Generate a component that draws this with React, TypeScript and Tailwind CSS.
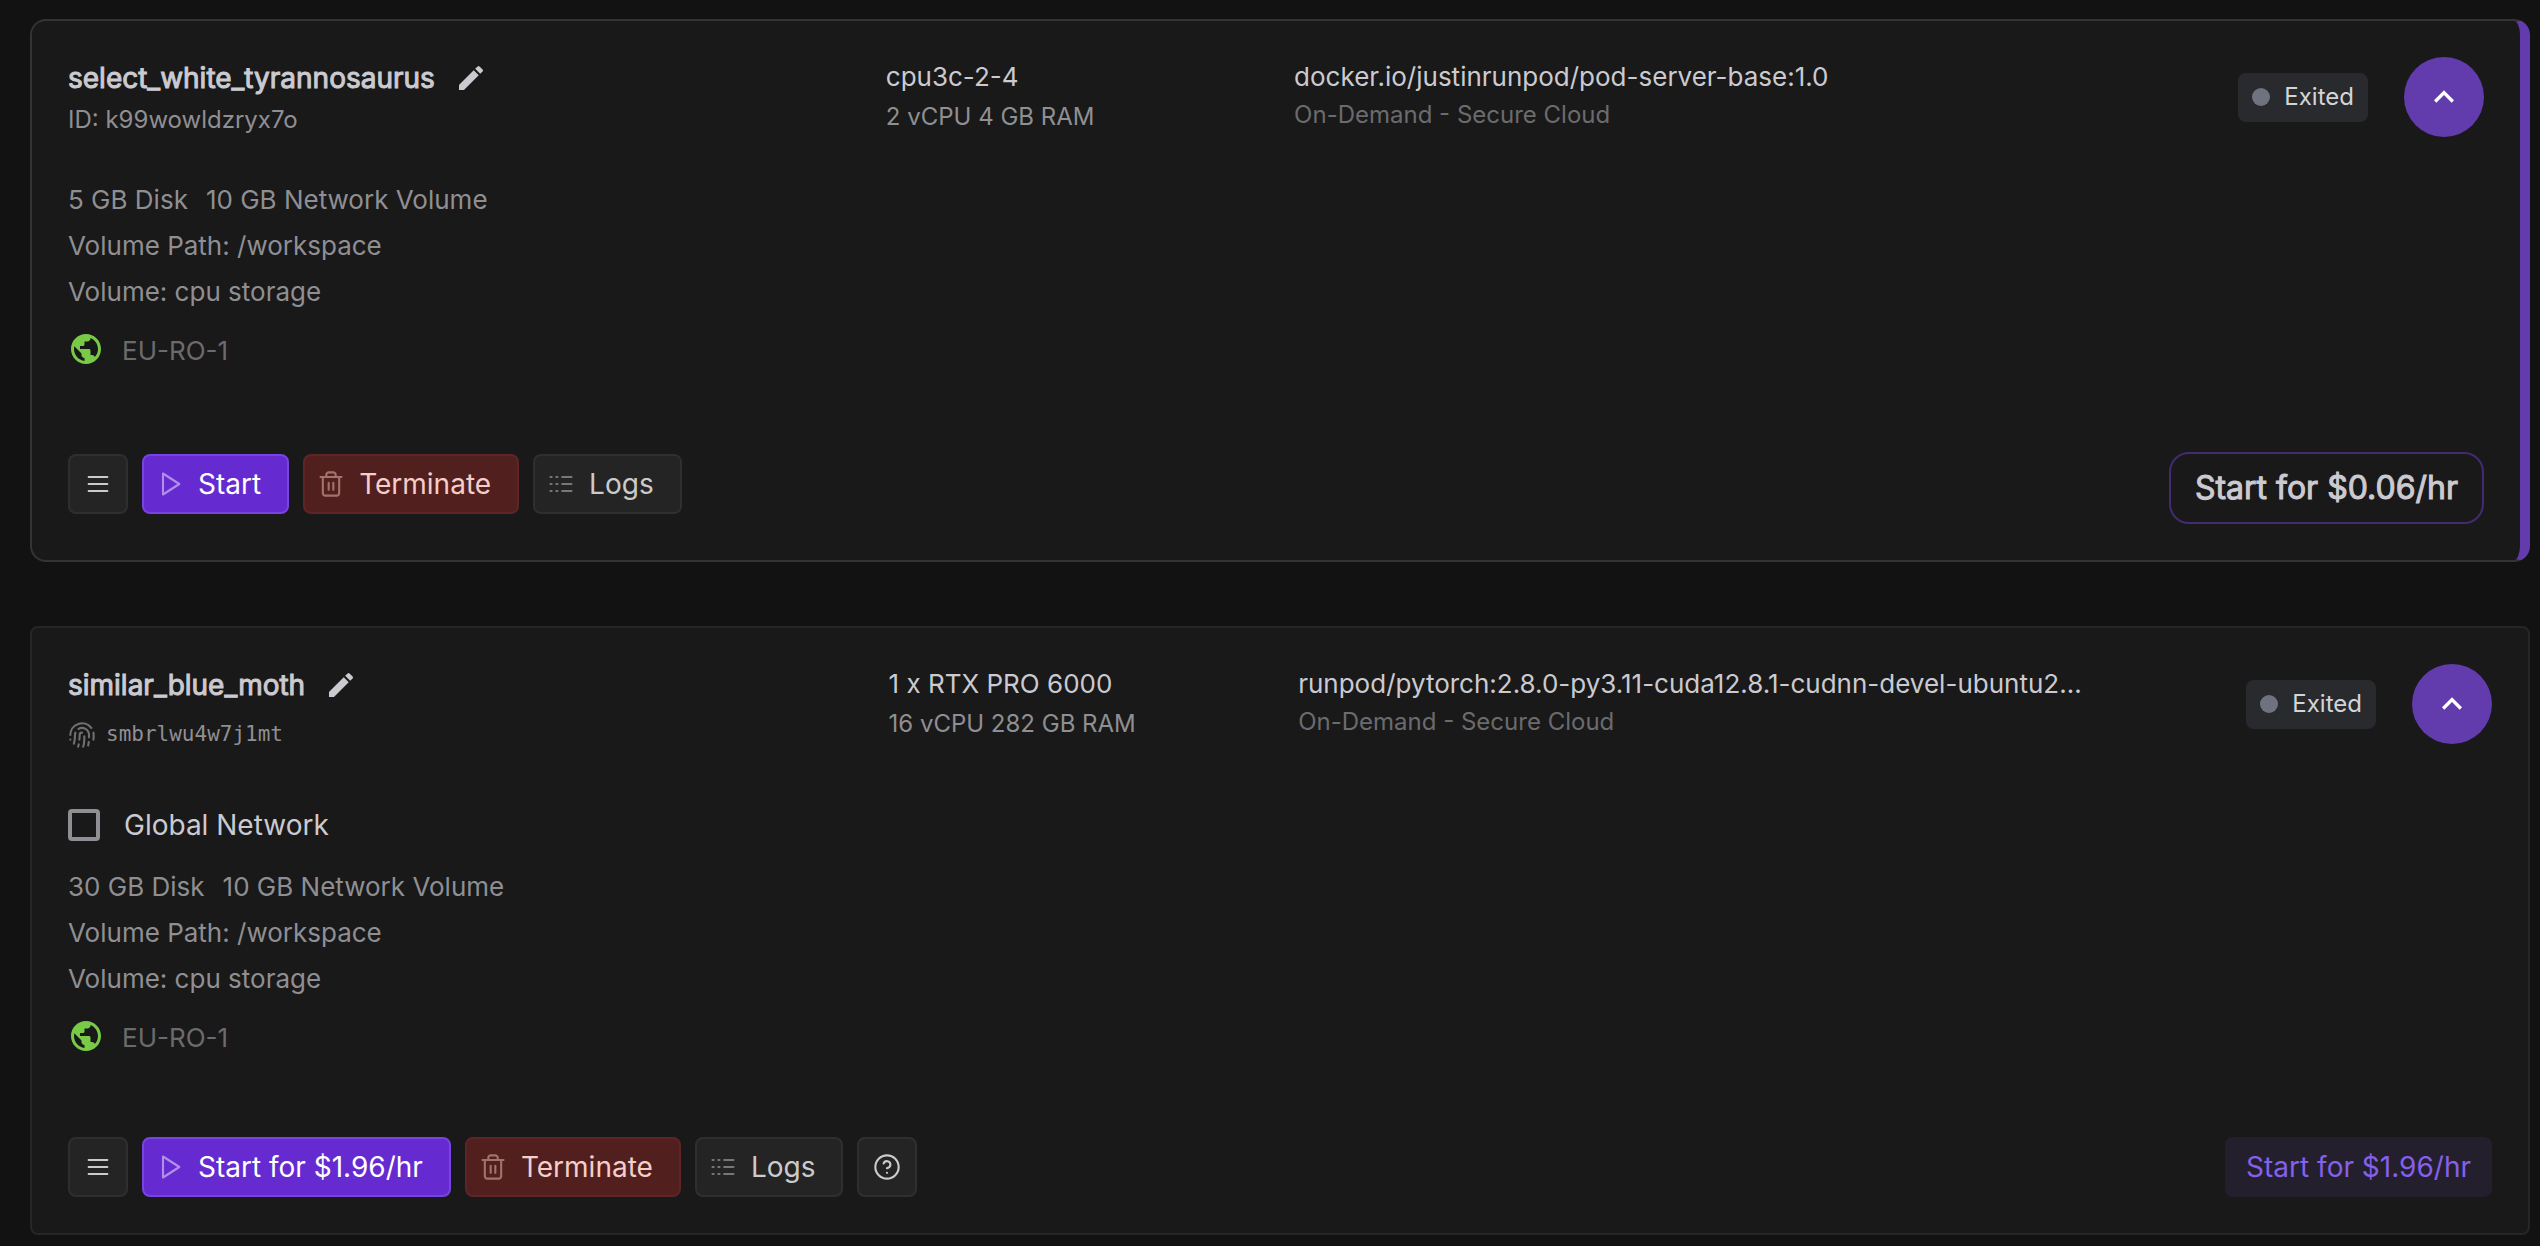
import type { ReactNode } from "react";
import { CircleHelp, Fingerprint } from "lucide-react";
import { MdEdit, MdExpandLess, MdPublic } from "react-icons/md";

type Pod = {
  name: string;
  id: string;
  machine: string;
  specs: string;
  image: string;
  disk: string;
  price: string;
  featured: boolean;
};

const PODS: Pod[] = [
  {
    name: "select_white_tyrannosaurus",
    id: "k99wowldzryx7o",
    machine: "cpu3c-2-4",
    specs: "2 vCPU 4 GB RAM",
    image: "docker.io/justinrunpod/pod-server-base:1.0",
    disk: "5 GB Disk",
    price: "$0.06/hr",
    featured: true,
  },
  {
    name: "similar_blue_moth",
    id: "smbrlwu4w7j1mt",
    machine: "1 x RTX PRO 6000",
    specs: "16 vCPU 282 GB RAM",
    image: "runpod/pytorch:2.8.0-py3.11-cuda12.8.1-cudnn-devel-ubuntu2…",
    disk: "30 GB Disk",
    price: "$1.96/hr",
    featured: false,
  },
];

function LineIcon({ children, className = "" }: { children: ReactNode; className?: string }) {
  return (
    <svg
      viewBox="0 0 24 24"
      fill="none"
      stroke="currentColor"
      strokeWidth="1.8"
      strokeLinecap="round"
      strokeLinejoin="round"
      className={`size-7 shrink-0 ${className}`}
      aria-hidden="true"
    >
      {children}
    </svg>
  );
}

const BUTTON = "flex h-[60px] items-center rounded-lg border-2 text-[28px]";
const GREY = "border-[#2f2f2f] bg-[#242424] text-[#cbcbcb]";

function Actions({ pod }: { pod: Pod }) {
  return (
    <div className="flex gap-3.5">
      <button aria-label="Menu" className={`${BUTTON} ${GREY} w-[60px] justify-center`}>
        <LineIcon>
          <path d="M4 6h16M4 12h16M4 18h16" />
        </LineIcon>
      </button>
      <button className={`${BUTTON} gap-3.5 border-[#7743e3] bg-[#652bd0] pl-3 pr-[26px] text-white`}>
        <LineIcon className="text-[#b08fe9]">
          <path d="M6 3l14 9-14 9z" />
        </LineIcon>
        {pod.featured ? "Start" : `Start for ${pod.price}`}
      </button>
      <button className={`${BUTTON} gap-3.5 border-[#5f2425] bg-[#51201e] pl-3 pr-[26px] text-[#f6cdc8]`}>
        <LineIcon className="text-[#a6706d]">
          <path d="M3 6h18M19 6v14c0 1-1 2-2 2H7c-1 0-2-1-2-2V6M8 6V4c0-1 1-2 2-2h4c1 0 2 1 2 2v2M10 11v6M14 11v6" />
        </LineIcon>
        Terminate
      </button>
      <button className={`${BUTTON} ${GREY} gap-3.5 pl-3 pr-[26px]`}>
        <LineIcon className="text-[#777777]">
          <path d="M13 12h8M13 18h8M13 6h8M3 12h1M3 18h1M3 6h1M8 12h1M8 18h1M8 6h1" />
        </LineIcon>
        Logs
      </button>
      {!pod.featured && (
        <button aria-label="Help" className={`${BUTTON} ${GREY} w-[60px] justify-center`}>
          <CircleHelp className="size-7" strokeWidth={1.8} />
        </button>
      )}
    </div>
  );
}

function PodCard({ pod }: { pod: Pod }) {
  return (
    <article
      className={
        pod.featured
          ? "rounded-2xl border-2 border-r-[10px] border-[#343434] border-r-[#623bad] bg-[#191919] p-9"
          : "rounded-lg border-2 border-[#262626] bg-[#191919] p-9"
      }
    >
      <header className="grid grid-cols-[677fr_338fr_652fr_333fr] items-start">
        <div className="min-w-0">
          <div className="flex h-[42px] items-center gap-5">
            <h2 className="text-[28px] text-[#cbcad1] [-webkit-text-stroke:1px_#cbcad1]">{pod.name}</h2>
            <button aria-label="Rename pod" className="text-[#cbcad1]">
              <MdEdit className="size-8" />
            </button>
          </div>
          {pod.featured ? (
            <p className="text-[24px] leading-[42px] text-[#8f8f93]">ID: {pod.id}</p>
          ) : (
            <div className="flex h-[58px] items-center gap-2.5 text-[#8f8f93]">
              <Fingerprint className="size-7 text-[#707073]" strokeWidth={1.8} />
              <p className="font-['DejaVu_Sans_Mono',monospace] text-[21px]">{pod.id}</p>
            </div>
          )}
        </div>
        <div className="min-w-0">
          <p className="text-[26px] leading-10 text-[#cbcad1]">{pod.machine}</p>
          <p className="text-[24px] leading-10 text-[#8f8f93]">{pod.specs}</p>
        </div>
        <div className="min-w-0">
          <p className="whitespace-nowrap text-[26px] leading-10 text-[#cbcad1]">{pod.image}</p>
          <p className="text-[24px] leading-9 text-[#6b6b6e]">On-Demand - Secure Cloud</p>
        </div>
        <div className="flex items-center justify-end gap-9">
          <span className="flex h-[49px] items-center gap-3.5 rounded-lg bg-[#292a2e] px-3.5 text-[24px] text-[#d3d4d7]">
            <i className="size-[18px] rounded-full bg-[#6f7380]" />
            Exited
          </span>
          <button
            aria-label="Collapse"
            className="flex size-20 items-center justify-center rounded-full bg-[#623bad] text-white"
          >
            <MdExpandLess className="size-10" />
          </button>
        </div>
      </header>

      <section className="mt-9 text-[26px] leading-[46px] text-[#8f8f93]">
        {!pod.featured && (
          <label className="mb-3.5 flex h-[50px] items-center gap-6 text-[28px] text-[#cbcad1]">
            <input
              type="checkbox"
              className="size-8 appearance-none rounded border-4 border-[#8f8f93] checked:bg-[#623bad]"
            />
            Global Network
          </label>
        )}
        <p className="flex gap-[18px]">
          <span>{pod.disk}</span>
          <span>10 GB Network Volume</span>
        </p>
        <p>Volume Path: /workspace</p>
        <p>Volume: cpu storage</p>
        <p className="mt-4 flex h-9 items-center gap-[18px] text-[#6b6b6e]">
          <MdPublic className="size-9 text-[#79cb47]" />
          <span className="pt-1">EU-RO-1</span>
        </p>
      </section>

      {pod.featured ? (
        <footer className="mt-[85px] flex items-start justify-between">
          <div className="pt-0.5">
            <Actions pod={pod} />
          </div>
          <button className="h-[72px] rounded-[20px] border-2 border-[#432a71] px-6 text-[32px] text-[#cbcad1] [-webkit-text-stroke:1px_#cbcad1]">
            Start for {pod.price}
          </button>
        </footer>
      ) : (
        <footer className="mt-[83px] flex items-center justify-between">
          <Actions pod={pod} />
          <button className="h-[60px] rounded-lg bg-[#241f2d] px-[21px] text-[28px] text-[#8560ea]">
            Start for {pod.price}
          </button>
        </footer>
      )}
    </article>
  );
}

export default function App() {
  return (
    <main className="flex min-h-screen flex-col gap-16 bg-[#121212] pb-[11px] pl-[30px] pr-2.5 pt-[19px] font-[Inter,sans-serif]">
      {PODS.map((pod) => (
        <PodCard key={pod.id} pod={pod} />
      ))}
    </main>
  );
}
